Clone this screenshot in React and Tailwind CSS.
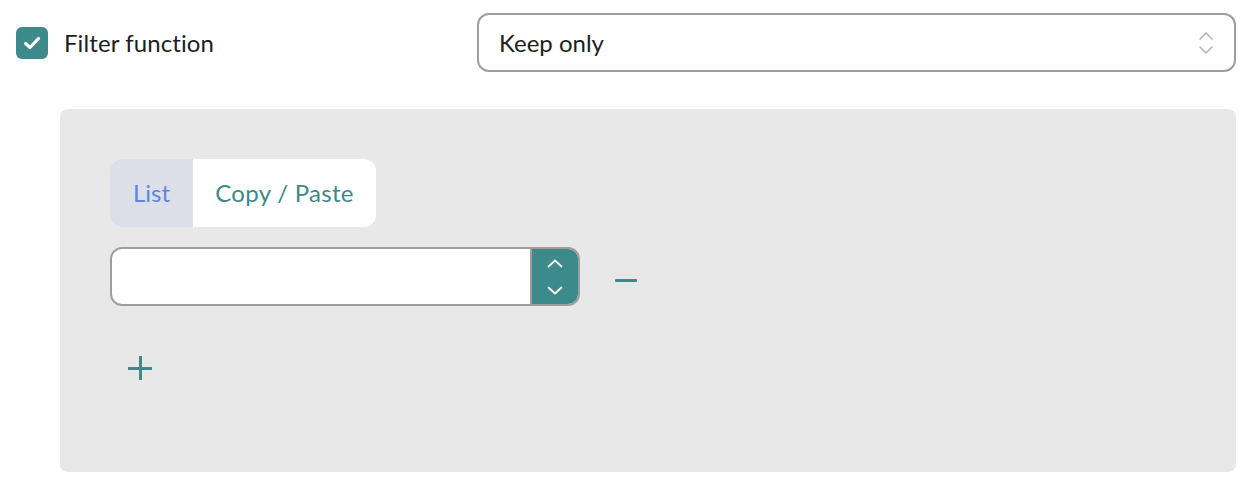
import React from "react";

export default function App() {
  return (
    <div className="w-[1252px] h-[482px] bg-white relative" style={{ fontFamily: "Lato, 'Noto Sans', sans-serif" }}>
      <div className="flex items-center pt-[13px] pl-4 pr-[16px]">
        <div className="flex items-center w-[461px]">
          <div className="w-8 h-8 rounded-[6px] bg-[#3c8a89] flex items-center justify-center">
            <svg width="18" height="14" viewBox="0 0 18 14" fill="none">
              <path d="M2.5 7.5 L7 11.5 L15.5 2.5" stroke="white" strokeWidth="3.2" strokeLinecap="round" strokeLinejoin="round" />
            </svg>
          </div>
          <span className="ml-4 text-[24px] leading-none text-[#1c1f22] tracking-[0.1px]">Filter function</span>
        </div>
        <div className="flex-1 h-[59px] border-2 border-[#9e9e9e] rounded-[12px] flex items-center justify-between pl-[20px] pr-[20px]">
          <span className="text-[24px] leading-none text-[#1c1f22]">Keep only</span>
          <svg width="16" height="26" viewBox="0 0 16 26" fill="none">
            <path d="M2 9 L8 3 L14 9" stroke="#b5b5b5" strokeWidth="1.6" strokeLinecap="round" strokeLinejoin="round" />
            <path d="M2 17 L8 23 L14 17" stroke="#b5b5b5" strokeWidth="1.6" strokeLinecap="round" strokeLinejoin="round" />
          </svg>
        </div>
      </div>

      <div className="ml-[60px] mr-[16px] mt-[37px] h-[363px] bg-[#e8e8e8] rounded-[8px] pt-[50px] pl-[50px]">
        <div className="inline-flex h-[68px] rounded-[12px] overflow-hidden bg-white">
          <div className="w-[83px] bg-[#dcdfe7] flex items-center justify-center text-[24px] text-[#5b86df]">List</div>
          <div className="w-[183px] flex items-center justify-center text-[24px] text-[#3c8a89] tracking-[0.3px]">Copy / Paste</div>
        </div>
        <div className="flex items-center mt-[20px]">
          <div className="w-[470px] h-[59px] border-2 border-[#9e9e9e] rounded-[12px] bg-white flex overflow-hidden">
            <div className="flex-1" />
            <div className="w-[48px] bg-[#3c8a89] border-l-2 border-[#9e9e9e] flex flex-col items-center justify-center gap-[18px]">
              <svg width="16" height="9" viewBox="0 0 16 9" fill="none">
                <path d="M1.5 7.5 L8 1.5 L14.5 7.5" stroke="white" strokeWidth="1.8" strokeLinecap="round" strokeLinejoin="round" />
              </svg>
              <svg width="16" height="9" viewBox="0 0 16 9" fill="none">
                <path d="M1.5 1.5 L8 7.5 L14.5 1.5" stroke="white" strokeWidth="1.8" strokeLinecap="round" strokeLinejoin="round" />
              </svg>
            </div>
          </div>
          <div className="ml-[35px] mt-[8px] w-[22px] h-[3px] bg-[#3c8a89] rounded-[1px]" />
        </div>
        <div className="mt-[50px] ml-[18px] w-6 h-6 relative">
          <div className="absolute left-0 top-[10.5px] w-[24px] h-[3px] bg-[#3c8a89]" />
          <div className="absolute top-0 left-[10.5px] w-[3px] h-[24px] bg-[#3c8a89]" />
        </div>
      </div>
    </div>
  );
}
